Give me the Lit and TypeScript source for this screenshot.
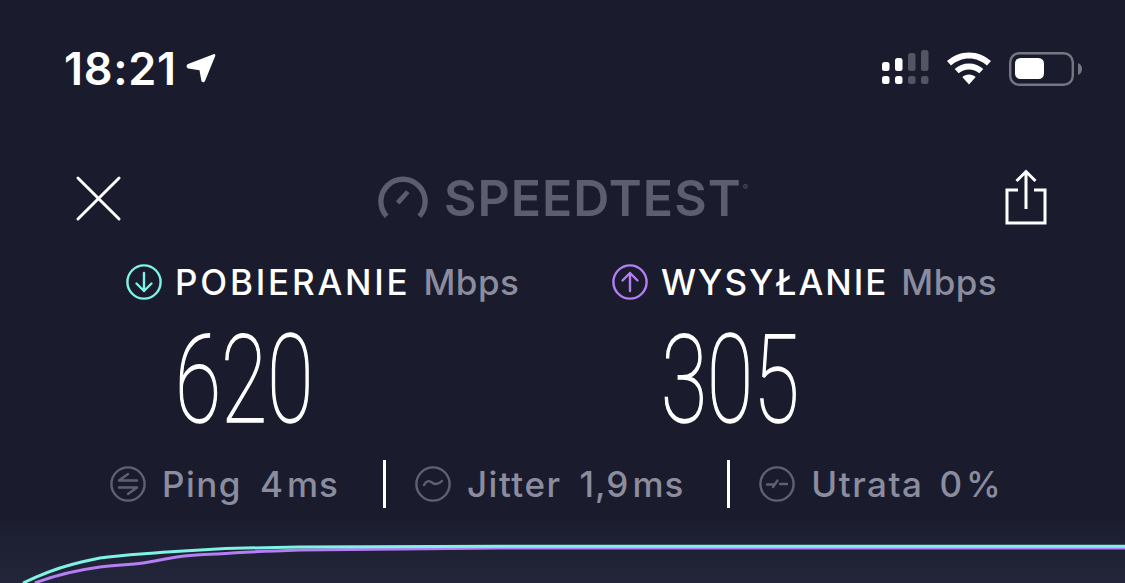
import { LitElement, css, html, svg } from 'lit'
import { customElement } from 'lit/decorators.js'

const ringIcon = (color: string, inner: unknown) => html`
  <svg class="ring" viewBox="0 0 36 36" fill="none" stroke=${color} stroke-width="2.4" stroke-linecap="round" stroke-linejoin="round">
    <circle cx="18" cy="18" r="16.6"></circle>
    ${inner}
  </svg>
`

@customElement('app-root')
export class AppRoot extends LitElement {
  static styles = css`
    :host {
      display: block;
      width: 1125px;
      height: 583px;
      overflow: hidden;
      color: #fff;
      background: linear-gradient(#1a1c2e 0, #1a1c2e 515px, #23253a 583px);
      font-family: Inter, 'Noto Sans', sans-serif;
    }
    .status {
      display: flex;
      align-items: center;
      height: 70px;
      padding: 34px 42px 0 64px;
    }
    .time {
      font-size: 45px;
      font-weight: 600;
      letter-spacing: 0.7px;
      line-height: 70px;
    }
    .loc {
      width: 32px;
      height: 32px;
      margin-left: 8px;
      margin-top: -2px;
    }
    .status-right {
      display: flex;
      align-items: center;
      margin-left: auto;
    }
    .signal { width: 48px; height: 38px; }
    .wifi { width: 46px; height: 36px; margin-left: 16px; }
    .battery { width: 74px; height: 36px; margin-left: 17px; }
    .header {
      display: flex;
      align-items: center;
      height: 56px;
      margin-top: 66px;
      padding: 0 77px 0 75px;
    }
    .close { width: 47px; height: 47px; }
    .logo {
      display: flex;
      align-items: center;
      margin-left: 256px;
    }
    .gauge { width: 50px; height: 46px; }
    .brand {
      margin-left: 16px;
      font-size: 50px;
      line-height: 56px;
      font-weight: 600;
      color: #5c5e70;
      letter-spacing: 1px;
    }
    .brand sup {
      font-size: 8px;
      font-weight: 400;
      vertical-align: 26px;
      line-height: 0;
      margin-left: 1px;
    }
    .share { width: 44px; height: 58px; margin-left: auto; }
    .speeds {
      display: grid;
      grid-template-columns: 486px 1fr;
      padding-left: 126px;
      margin-top: 38px;
    }
    .head {
      display: flex;
      align-items: center;
      height: 36px;
      white-space: nowrap;
    }
    .ring { width: 36px; height: 36px; flex: none; }
    .label {
      margin-left: 13px;
      font-size: 35px;
      font-weight: 500;
      letter-spacing: 2.8px;
    }
    .label.up { letter-spacing: 2px; }
    .unit {
      margin-left: 13px;
      font-size: 35px;
      font-weight: 500;
      color: #8b8d9f;
      letter-spacing: 0.4px;
    }
    .num {
      display: block;
      width: max-content;
      margin: 31px 0 0 49px;
      font-family: Roboto, sans-serif;
      font-size: 122px;
      line-height: 100px;
      font-weight: 100;
      -webkit-text-stroke: 1.5px #fff;
      transform-origin: left center;
      transform: scaleX(0.69);
    }
    .stats {
      display: flex;
      align-items: center;
      height: 48px;
      margin-top: 29px;
      padding-left: 110px;
      color: #8b8d9f;
      font-size: 35px;
      font-weight: 500;
      white-space: nowrap;
    }
    .stat { display: flex; align-items: center; }
    .stat b { margin-left: 16px; font-weight: 500; letter-spacing: 1.5px; }
    .stat span { margin-left: 18px; letter-spacing: 1px; }
    .stat i { font-style: normal; margin-left: 3px; letter-spacing: 1px; }
    .stat.last b { letter-spacing: 1.5px; }
    .stat.last span { margin-left: 16px; }
    .sep {
      width: 3px;
      height: 48px;
      margin-left: 44px;
      background: #fff;
    }
    .sep + .stat { margin-left: 29px; }
    .sep.narrow { margin-left: 43px; }
    .chart { display: block; width: 1125px; height: 60px; margin-top: 15px; }
  `

  render() {
    return html`
      <div class="status">
        <span class="time">18:21</span>
        <svg class="loc" viewBox="0 0 32 32"><path d="M3 12 28.500 2.200c1.300-.5 2.200.6 1.700 1.700L20 29c-.8 1.800-3.400 1.600-3.700-.4L14.500 18.200 3.400 16.500C1.300 16.200 1 12.800 3 12Z" fill="#fff"></path></svg>
        <div class="status-right">
          <svg class="signal" viewBox="0 0 48 38" fill="#fff">
            <rect x="0" y="12" width="7.500" height="9" rx="2.500"></rect>
            <rect x="13" y="8" width="7.500" height="13" rx="2.500"></rect>
            <rect x="26" y="3" width="7.500" height="18" rx="2.500" opacity=".25"></rect>
            <rect x="39" y="0" width="7.500" height="21" rx="2.500" opacity=".25"></rect>
            <rect x="0" y="26" width="7.500" height="8" rx="2.500"></rect>
            <rect x="13" y="26" width="7.500" height="8" rx="2.500"></rect>
            <rect x="26" y="26" width="7.500" height="8" rx="2.500" opacity=".25"></rect>
            <rect x="39" y="26" width="7.500" height="8" rx="2.500" opacity=".25"></rect>
          </svg>
          <svg class="wifi" viewBox="0 1.500 46 36" fill="#fff">
            <path d="M23 3c8.500 0 16 3.300 22 8.600l-4 4.400C36 11.700 29.800 9 23 9S10 11.700 5 16l-4-4.400C7 6.300 14.500 3 23 3Z"></path>
            <path d="M23 14c5.600 0 10.500 2 14.300 5.500l-4 4.300C30.500 21.300 27 20 23 20s-7.500 1.300-10.300 3.800l-4-4.300C12.500 16 17.400 14 23 14Z"></path>
            <path d="M23 25c2.700 0 5 1 6.700 2.600L23 35l-6.700-7.400C18 26 20.300 25 23 25Z"></path>
          </svg>
          <svg class="battery" viewBox="0 0 74 36">
            <rect x="1.200" y="2.200" width="62.600" height="31.600" rx="9" fill="none" stroke="#fff" stroke-opacity=".4" stroke-width="2.400"></rect>
            <rect x="6" y="7" width="29" height="21" rx="5.500" fill="#fff"></rect>
            <path d="M69 12c2.500.8 4 3.300 4 6s-1.500 5.200-4 6Z" fill="#fff" opacity=".4"></path>
          </svg>
        </div>
      </div>

      <div class="header">
        <svg class="close" viewBox="0 0 48 48" stroke="#fff" stroke-width="3" stroke-linecap="round">
          <path d="M3 3l42 42M45 3 3 45"></path>
        </svg>
        <div class="logo">
          <svg class="gauge" viewBox="0 0 52 46" fill="none" stroke="#5c5e70" stroke-width="5.500">
            <path d="M9 42A23 23 0 1 1 43 42"></path>
            <path d="M20.500 28 31 16.500" stroke-width="5"></path>
          </svg>
          <span class="brand">SPEEDTEST<sup>®</sup></span>
        </div>
        <svg class="share" viewBox="0 0 44 58" fill="none" stroke="#fff" stroke-width="3">
          <path d="M14 21H3v33h38V21H30"></path>
          <path d="M22 40V3M12.500 12 22 2.500 31.500 12"></path>
        </svg>
      </div>

      <div class="speeds">
        <div>
          <div class="head">
            ${ringIcon('#7ff3e5', svg`<path d="M18 9v18M10.500 19.500 18 27l7.500-7.500"></path>`)}
            <span class="label">POBIERANIE</span>
            <span class="unit">Mbps</span>
          </div>
          <span class="num">620</span>
        </div>
        <div>
          <div class="head">
            ${ringIcon('#b57ef5', svg`<path d="M18 27V9M10.500 16.500 18 9l7.500 7.500"></path>`)}
            <span class="label up">WYSYŁANIE</span>
            <span class="unit">Mbps</span>
          </div>
          <span class="num">305</span>
        </div>
      </div>

      <div class="stats">
        <div class="stat">
          ${ringIcon('#5f6173', svg`<path d="M9 14.500h18M18 8l-9 6.500M9 21.500h18M18 28l9-6.500"></path>`)}
          <b>Ping</b><span>4</span><i>ms</i>
        </div>
        <div class="sep"></div>
        <div class="stat">
          ${ringIcon('#5f6173', svg`<path d="M9 19c2-4 5-5 8-2.500s6 2.500 10-1.500"></path>`)}
          <b>Jitter</b><span>1,9</span><i>ms</i>
        </div>
        <div class="sep narrow"></div>
        <div class="stat last">
          ${ringIcon('#5f6173', svg`<path d="M8 18.500h6M14 21l4.500-6.500M21 18h7"></path>`)}
          <b>Utrata</b><span>0</span><i>%</i>
        </div>
      </div>

      <svg class="chart" viewBox="0 0 1125 60" fill="none" stroke-width="3">
        <path stroke="#b57ef5" d="M35 60C58 51 78 47 100 44 116 42 130 42 143 40 155 38 165 36 177 34 190 32 204 31.500 217 31 245 29 270 28 300 27 345 26 390 25.500 500 25H1125"></path>
        <path stroke="#7ff3e5" d="M23 60C40 52 55 46 70 42 80 39 90 37 100 35 122 32 145 31 167 29 184 28 200 27 217 26 245 25 270 24.500 300 24 345 23.500 390 23.200 500 23.200H1125"></path>
      </svg>
    `
  }
}
